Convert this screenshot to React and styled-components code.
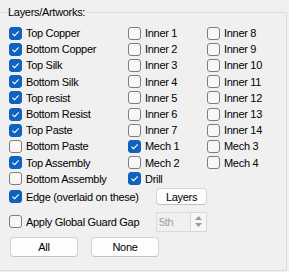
import React from "react";
import styled, {createGlobalStyle} from "styled-components";

const Global = createGlobalStyle`
  html, body {
    margin: 0;
    padding: 0;
    background: #f0f0f0;
  }
  body {
    font-family: "Liberation Sans", Arial, sans-serif;
    font-size: 11px;
    letter-spacing: -0.3px;
    color: #000;
  }
`;

const Page = styled.div`
  width: 289px;
  height: 272px;
  overflow: hidden;
  background: #f0f0f0;
`;

const Group = styled.div`
  margin: 12px 2px 0 0;
  height: 257px;
  border: 1px solid #dcdcdc;
  border-left: none;
`;

const Title = styled.div`
  width: fit-content;
  margin: -8px 0 0 7px;
  padding: 0 1px;
  line-height: 14px;
  background: #f0f0f0;
`;

const Grid = styled.div`
  display: grid;
  grid-template-columns: 119px 79px auto;
  grid-auto-flow: column;
  grid-template-rows: repeat(10, 16.2px);
  margin-top: 6px;
  padding-left: 9px;
`;

const Label = styled.label`
  display: flex;
  align-items: center;
  white-space: nowrap;
  line-height: 14px;
`;

const Box = styled.span`
  flex: none;
  width: 13px;
  height: 13px;
  box-sizing: border-box;
  border-radius: 3px;
  margin-right: 4px;
  display: flex;
  align-items: center;
  justify-content: center;
  background: ${p => (p.$on ? "#0f62be" : "#f7f7f7")};
  border: 1px solid ${p => (p.$on ? "#0f62be" : "#7e7e7e")};
`;

const Check = ({on, children}) => (
  <Label>
    <Box $on={on}>
      {on && (
        <svg width="9" height="9" viewBox="0 0 9 9">
          <path d="M1.4 4.6 L3.6 6.7 L7.7 2.3" fill="none" stroke="#fff" strokeWidth="1.1" />
        </svg>
      )}
    </Box>
    {children}
  </Label>
);

const Row = styled.div`
  display: grid;
  grid-template-columns: 147px auto;
  align-items: center;
  height: ${p => p.$h}px;
  margin-top: ${p => p.$mt}px;
  padding-left: 9px;
`;

const Button = styled.button`
  font: inherit;
  letter-spacing: inherit;
  color: #000;
  box-sizing: border-box;
  width: ${p => p.$w}px;
  height: ${p => p.$h}px;
  padding: 0;
  background: #fdfdfd;
  border: 1px solid #d3d3d3;
  border-bottom-color: #c2c2c2;
  border-radius: 4px;
`;

const Spin = styled.div`
  display: flex;
  width: 51px;
  height: 20px;
  box-sizing: border-box;
  border: 1px solid #d9d9d9;
  background: #f0f0f0;
`;

const SpinText = styled.span`
  flex: 1;
  padding-left: 2px;
  line-height: 18px;
  color: #a0a0a0;
`;

const SpinArrows = styled.div`
  width: 15px;
  border-left: 1px solid #d9d9d9;
  background: #f7f7f7;
  display: flex;
  flex-direction: column;
  align-items: center;
  justify-content: center;
  gap: 3px;
`;

const Buttons = styled.div`
  display: flex;
  gap: 13px;
  margin-top: 5px;
  padding-left: 10px;
`;

const col1 = [
  ["Top Copper", true],
  ["Bottom Copper", true],
  ["Top Silk", true],
  ["Bottom Silk", true],
  ["Top resist", true],
  ["Bottom Resist", true],
  ["Top Paste", true],
  ["Bottom Paste", false],
  ["Top Assembly", true],
  ["Bottom Assembly", false],
];

const col2 = [
  ["Inner 1", false],
  ["Inner 2", false],
  ["Inner 3", false],
  ["Inner 4", false],
  ["Inner 5", false],
  ["Inner 6", false],
  ["Inner 7", false],
  ["Mech 1", true],
  ["Mech 2", false],
  ["Drill", true],
];

const col3 = [
  ["Inner 8", false],
  ["Inner 9", false],
  ["Inner 10", false],
  ["Inner 11", false],
  ["Inner 12", false],
  ["Inner 13", false],
  ["Inner 14", false],
  ["Mech 3", false],
  ["Mech 4", false],
];

const App = () => {
  return (
    <Page>
      <Global />
      <Group>
        <Title>Layers/Artworks:</Title>
        <Grid>
          {[...col1, ...col2, ...col3].map(([name, on]) => (
            <Check key={name} on={on}>{name}</Check>
          ))}
        </Grid>
        <Row $h={18} $mt={1}>
          <Check on>Edge (overlaid on these)</Check>
          <Button $w={51} $h={17}>Layers</Button>
        </Row>
        <Row $h={20} $mt={6}>
          <Check>Apply Global Guard Gap</Check>
          <Spin>
            <SpinText>5th</SpinText>
            <SpinArrows>
              <svg width="7" height="4" viewBox="0 0 7 4"><path d="M0 4 L3.5 0 L7 4 Z" fill="#9a9a9a" /></svg>
              <svg width="7" height="4" viewBox="0 0 7 4"><path d="M0 0 L3.5 4 L7 0 Z" fill="#9a9a9a" /></svg>
            </SpinArrows>
          </Spin>
        </Row>
        <Buttons>
          <Button $w={68} $h={20}>All</Button>
          <Button $w={68} $h={20}>None</Button>
        </Buttons>
      </Group>
    </Page>
  );
};

export default App;
